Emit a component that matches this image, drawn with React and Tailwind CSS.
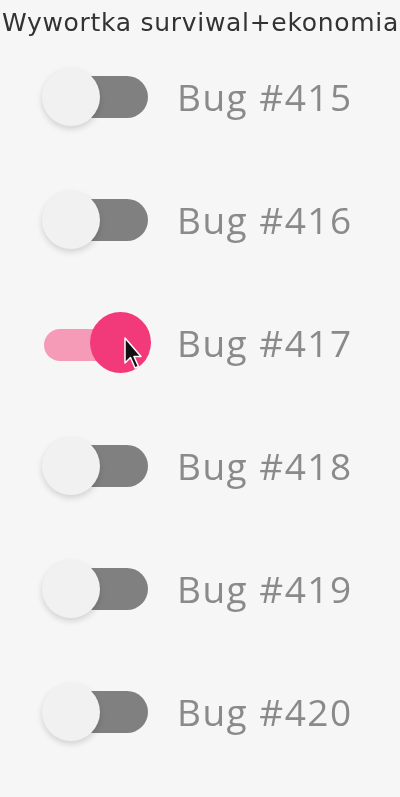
const bugs = [
  { id: 415, on: false },
  { id: 416, on: false },
  { id: 417, on: true },
  { id: 418, on: false },
  { id: 419, on: false },
  { id: 420, on: false },
]

// mouse pointer sitting over the active toggle
function Cursor() {
  return (
    <svg className="absolute left-[33px] top-[25px]" width="20" height="34" viewBox="0 0 20 34">
      <path
        d="M2 1 L2 26 L7.5 20.5 L12 31 L15.5 29.5 L11 19.5 L18 19.5 Z"
        fill="#111"
        stroke="#fff"
        strokeWidth="1.5"
        strokeLinejoin="round"
      />
    </svg>
  )
}

function Switch({ on }) {
  if (on) {
    return (
      <div className="flex items-center w-[112px] h-[62px] shrink-0 pl-[4px]">
        <div className="w-[70px] h-[32px] mt-[4px] rounded-full bg-[#f59bb8]" />
        <div className="relative -ml-[24px] w-[61px] h-[61px] rounded-full bg-[#f23a7a]">
          <Cursor />
        </div>
      </div>
    )
  }
  return (
    <div className="flex items-center w-[112px] h-[62px] shrink-0 pl-[2px]">
      <div className="relative z-10 w-[58px] h-[58px] rounded-full bg-[#f1f1f1] shadow-[0_3px_6px_rgba(0,0,0,0.15)]" />
      <div className="-ml-[30px] w-[78px] h-[42px] rounded-full bg-[#808080]" />
    </div>
  )
}

export default function App() {
  return (
    <div
      className="min-h-[797px] w-[400px] bg-[#f6f6f6] blur-[0.5px]"
      style={{ fontFamily: '"DejaVu Sans", "Open Sans", sans-serif' }}
    >
      {/* title */}
      <div className="h-[35px] pl-[2px] pt-[9px] text-[25px] leading-[28px] text-[#333] whitespace-nowrap tracking-[0.7px]">
        Wywortka surviwal+ekonomia
      </div>

      {/* toggle rows */}
      <div className="flex flex-col">
        {bugs.map((b) => (
          <div key={b.id} className="h-[123px] flex items-center gap-[25px] pl-[40px]">
            <Switch on={b.on} />
            <span
              className="text-[37px] leading-none font-medium text-[#8a8a8a] tracking-[1.5px]"
              style={{ fontFamily: '"Open Sans", sans-serif' }}
            >
              Bug #{b.id}
            </span>
          </div>
        ))}
      </div>
    </div>
  )
}
